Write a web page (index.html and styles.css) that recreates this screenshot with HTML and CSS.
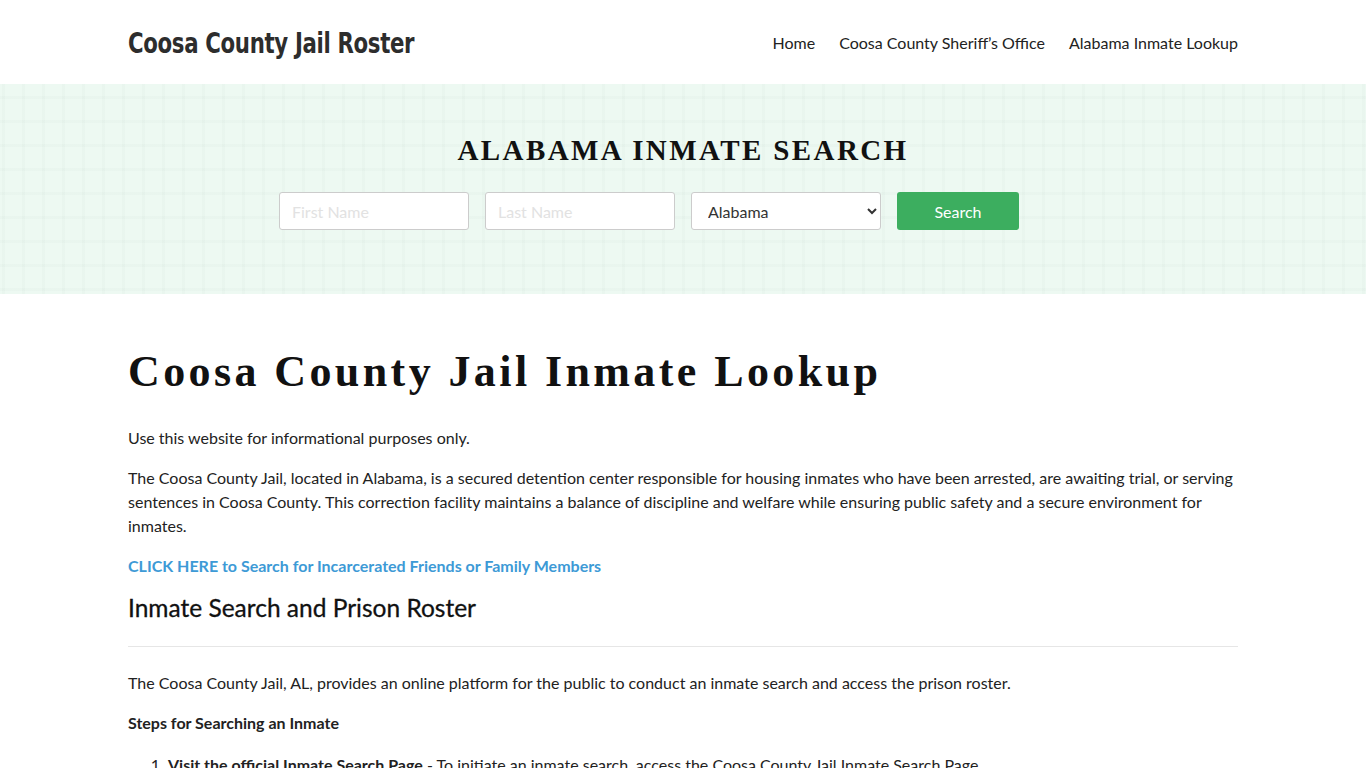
FILE: index.html
```html
<!DOCTYPE html>
<html lang="en">
<head>
<meta charset="utf-8">
<title>Coosa County Jail Roster</title>
<link rel="stylesheet" href="styles.css">
</head>
<body>
<header class="site-header">
  <div class="container header-inner">
    <a class="logo" href="#">Coosa County Jail Roster</a>
    <nav class="nav">
      <a href="#">Home</a>
      <a href="#">Coosa County Sheriff’s Office</a>
      <a href="#">Alabama Inmate Lookup</a>
    </nav>
  </div>
</header>
<section class="hero">
  <h2 class="hero-title">ALABAMA INMATE SEARCH</h2>
  <form class="search-form">
    <input class="field" type="text" placeholder="First Name">
    <input class="field" type="text" placeholder="Last Name">
    <select class="field select">
      <option>Alabama</option>
    </select>
    <button class="btn" type="button">Search</button>
  </form>
</section>
<main class="container content">
  <h1 class="page-title">Coosa County Jail Inmate Lookup</h1>
  <p>Use this website for informational purposes only.</p>
  <p>The Coosa County Jail, located in Alabama, is a secured detention center responsible for housing inmates who have been arrested, are awaiting trial, or serving sentences in Coosa County. This correction facility maintains a balance of discipline and welfare while ensuring public safety and a secure environment for inmates.</p>
  <p><a class="cta" href="#">CLICK HERE to Search for Incarcerated Friends or Family Members</a></p>
  <h2 class="section-title">Inmate Search and Prison Roster</h2>
  <hr class="divider">
  <p>The Coosa County Jail, AL, provides an online platform for the public to conduct an inmate search and access the prison roster.</p>
  <p><strong>Steps for Searching an Inmate</strong></p>
  <ol class="steps">
    <li><strong>Visit the official Inmate Search Page</strong> - To initiate an inmate search, access the Coosa County Jail Inmate Search Page.</li>
  </ol>
</main>
</body>
</html>
```

FILE: styles.css
```css
* { box-sizing: border-box; }
html, body { margin: 0; padding: 0; }
body {
  font-family: Lato, "Open Sans", sans-serif;
  font-size: 16px;
  line-height: 24px;
  color: #222;
  background: #fff;
}
.container {
  width: 1110px;
  margin: 0 auto;
}
.site-header {
  height: 84px;
  background: #fff;
}
.header-inner {
  height: 84px;
  display: flex;
  align-items: center;
  justify-content: space-between;
}
.logo {
  display: inline-block;
  font-family: "DejaVu Sans", sans-serif;
  font-stretch: condensed;
  font-weight: 700;
  font-size: 29px;
  letter-spacing: -0.4px;
  color: #2d2d2d;
  text-decoration: none;
  padding-top: 2px;
  transform: scaleX(0.815);
  transform-origin: left center;
}
.nav {
  display: flex;
  gap: 24px;
  padding-top: 2px;
}
.nav a {
  color: #222;
  text-decoration: none;
  font-size: 16px;
}
.hero {
  height: 210px;
  background-color: #edf9f2;
  background-image:
    linear-gradient(to right, rgba(0, 40, 20, 0.017) 3px, transparent 3px),
    linear-gradient(to bottom, rgba(0, 40, 20, 0.017) 3px, transparent 3px);
  background-size: 20px 24px, 20px 24px;
  background-position: 2px 12px, 2px 12px;
  display: flex;
  flex-direction: column;
  align-items: center;
  padding-top: 48px;
}
.hero-title {
  margin: 0;
  font-family: "Liberation Serif", "Times New Roman", serif;
  font-weight: 700;
  font-size: 29px;
  line-height: 36px;
  letter-spacing: 2.4px;
  color: #111;
}
.search-form {
  display: flex;
  gap: 16px;
  margin-top: 24px;
  padding-right: 68px;
}
.field {
  width: 190px;
  height: 38px;
  border: 1px solid #ccc;
  border-radius: 3px;
  background: #fff;
  padding: 0 12px;
  font-family: Lato, sans-serif;
  font-size: 16px;
  color: #333;
}
.field::placeholder { color: #e2e2e2; }
.select {
  padding-left: 12px;
  color: #333;
}
.btn {
  width: 122px;
  height: 38px;
  border: none;
  border-radius: 3px;
  background: #3cae5f;
  color: #fff;
  font-family: Lato, sans-serif;
  font-size: 16px;
}
.content {
  padding-top: 52px;
}
.page-title {
  margin: 0 0 28px;
  font-family: "Liberation Serif", "Times New Roman", serif;
  font-weight: 700;
  font-size: 44px;
  line-height: 52px;
  letter-spacing: 3.4px;
  color: #111;
}
.content p {
  margin: 0 0 16px;
}
.cta {
  color: #3d9ad6;
  font-weight: 700;
  text-decoration: none;
}
.section-title {
  margin: 0;
  font-weight: 400;
  font-size: 24.5px;
  line-height: 28px;
  color: #111;
  -webkit-text-stroke: 0.3px #111;
}
.divider {
  border: none;
  border-top: 1px solid #e6e6e6;
  margin: 24px 0 24px;
}
.steps {
  margin: 16px 0 0;
  padding-left: 40px;
}
.content p + .steps { margin-top: 16px; }
.content p:has(+ .steps) { margin-bottom: 18px; }
```
